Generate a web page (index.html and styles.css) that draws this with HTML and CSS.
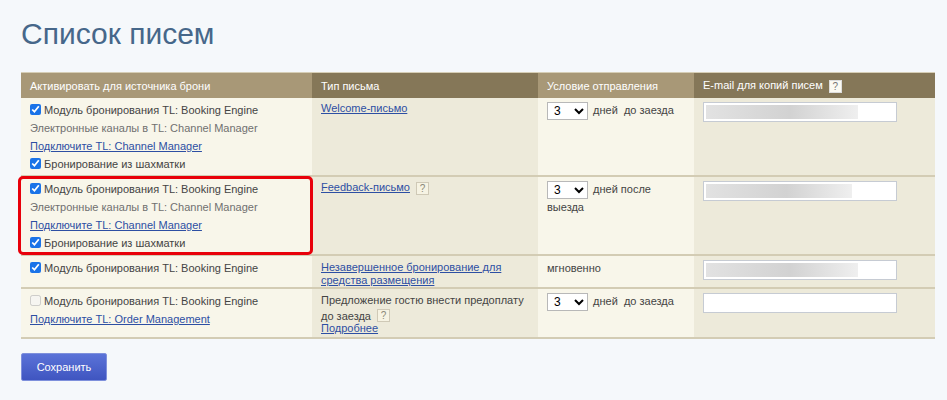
FILE: index.html
```html
<!DOCTYPE html>
<html lang="ru">
<head>
<meta charset="UTF-8">
<title>Список писем</title>
<link rel="stylesheet" href="styles.css">
</head>
<body>
<h1 class="page-title">Список писем</h1>

<table class="letters">
  <thead>
    <tr>
      <th class="col-src">Активировать для источника брони</th>
      <th class="col-type">Тип письма</th>
      <th class="col-cond">Условие отправления</th>
      <th class="col-mail">E-mail для копий писем <span class="help help-head">?</span></th>
    </tr>
  </thead>
  <tbody>
    <tr>
      <td class="col-src">
        <div class="src-line"><input type="checkbox" checked> Модуль бронирования TL: Booking Engine</div>
        <div class="src-line muted">Электронные каналы в TL: Channel Manager</div>
        <div class="src-line"><a href="#">Подключите TL: Channel Manager</a></div>
        <div class="src-line"><input type="checkbox" checked> Бронирование из шахматки</div>
      </td>
      <td class="col-type"><a href="#">Welcome-письмо</a></td>
      <td class="col-cond">
        <select><option>3</option></select> дней&nbsp; до заезда
      </td>
      <td class="col-mail"><input type="text" class="mail blurred"></td>
    </tr>
    <tr class="marked">
      <td class="col-src">
        <div class="highlight"></div>
        <div class="src-line"><input type="checkbox" checked> Модуль бронирования TL: Booking Engine</div>
        <div class="src-line muted">Электронные каналы в TL: Channel Manager</div>
        <div class="src-line"><a href="#">Подключите TL: Channel Manager</a></div>
        <div class="src-line"><input type="checkbox" checked> Бронирование из шахматки</div>
      </td>
      <td class="col-type"><a href="#">Feedback-письмо</a> <span class="help">?</span></td>
      <td class="col-cond">
        <select><option>3</option></select> дней после<br>выезда
      </td>
      <td class="col-mail"><input type="text" class="mail blurred short"></td>
    </tr>
    <tr>
      <td class="col-src">
        <div class="src-line"><input type="checkbox" checked> Модуль бронирования TL: Booking Engine</div>
      </td>
      <td class="col-type tight"><a href="#">Незавершенное бронирование для средства размещения</a></td>
      <td class="col-cond plain">мгновенно</td>
      <td class="col-mail"><input type="text" class="mail blurred"></td>
    </tr>
    <tr>
      <td class="col-src">
        <div class="src-line"><input type="checkbox" disabled> Модуль бронирования TL: Booking Engine</div>
        <div class="src-line"><a href="#">Подключите TL: Order Management</a></div>
      </td>
      <td class="col-type">
        <div class="offer">Предложение гостю внести предоплату до заезда <span class="help help-up">?</span></div>
        <a href="#" class="more">Подробнее</a>
      </td>
      <td class="col-cond">
        <select><option>3</option></select> дней&nbsp; до заезда
      </td>
      <td class="col-mail"><input type="text" class="mail"></td>
    </tr>
  </tbody>
</table>

<button class="save-button">Сохранить</button>
</body>
</html>
```

FILE: styles.css
```css
/* общий фон и шрифт */
html, body {
    margin: 0;
    padding: 0;
}

body {
    background-color: #f5f8fb;
    font-family: "Liberation Sans", Arial, sans-serif;
    font-size: 11px;
    color: #444;
    padding: 14px 12px 0 21px;
}

a {
    color: #2d4fa3;
}

/* заголовок */
.page-title {
    margin: 0 0 18px 0;
    font-size: 30px;
    font-weight: normal;
    color: #46678a;
    line-height: 40px;
}

/* таблица писем */
.letters {
    width: 914px;
    border-collapse: collapse;
}

.letters th {
    height: 25px;
    padding: 0 9px;
    text-align: left;
    font-weight: normal;
    font-size: 11px;
    color: #fff;
    border-top: 1px solid #d6ceb6;
}

.letters th.col-src,
.letters th.col-cond {
    background-color: #a89877;
}

.letters th.col-type,
.letters th.col-mail {
    background-color: #857758;
}

.letters td {
    vertical-align: top;
    padding: 3px 9px 2px 9px;
    border-bottom: 2px solid #d3ccb4;
    line-height: 16px;
}

.letters td.col-src,
.letters td.col-cond {
    background-color: #f8f6ea;
}

.letters td.col-type,
.letters td.col-mail {
    background-color: #edeada;
}

.col-src { width: 273px; }
.col-type { width: 208px; }
.col-cond { width: 138px; }

/* колонка источников */
.src-line {
    line-height: 18px;
    white-space: nowrap;
}

.src-line input {
    margin: 0;
    width: 11px;
    height: 11px;
    vertical-align: -1px;
    accent-color: #1a73e8;
}

.muted {
    color: #707070;
}

.marked .col-src {
    position: relative;
}

/* красная рамка поверх строки */
.highlight {
    position: absolute;
    left: -3px;
    top: -1px;
    right: -1px;
    bottom: -1px;
    border: 3px solid #e8000a;
    border-radius: 5px;
    pointer-events: none;
}

.letters td.col-type {
    padding-top: 2px;
}

.letters td.tight {
    line-height: 13px;
    padding-top: 5px;
    padding-bottom: 0;
}

.offer {
    line-height: 16px;
    padding-top: 1px;
}

.more {
    display: block;
    line-height: 13px;
    margin-top: -2px;
}

/* иконка подсказки */
.help {
    display: inline-block;
    width: 11px;
    height: 11px;
    line-height: 11px;
    font-size: 10px;
    text-align: center;
    color: #8a8a7a;
    background-color: #f6f3e3;
    border: 1px solid #cfc9b6;
    margin-left: 3px;
    vertical-align: -1px;
}

.help-up {
    vertical-align: 1px;
}

.help-head {
    background-color: #fbfaf3;
    color: #777;
    border-color: #ddd;
    margin-left: 3px;
}

/* условие отправления */
.letters td.col-cond {
    padding-top: 4px;
}

.letters td.plain {
    padding-top: 4px;
}

.col-cond select {
    width: 41px;
    height: 18px;
    font-family: "Liberation Sans", Arial, sans-serif;
    font-size: 12px;
    padding: 0 0 0 2px;
    margin: 0 2px 0 0;
    border: 1px solid #b8b8b8;
    background-color: #fff;
    vertical-align: top;
}

/* поле e-mail */
.mail {
    width: 194px;
    height: 20px;
    box-sizing: border-box;
    border: 1px solid #c6cbd3;
    background-color: #fff;
    margin-top: 1px;
    padding: 0;
    vertical-align: top;
}

.blurred {
    background-image: linear-gradient(to right, #e2e2e2, #d2d2d2 55%, #efefef);
    background-size: 152px 14px;
    background-position: 2px 2px;
    background-repeat: no-repeat;
}

.blurred.short {
    background-size: 146px 14px;
}

/* кнопка сохранения */
.save-button {
    margin-top: 14px;
    width: 86px;
    height: 28px;
    font-family: "Liberation Sans", Arial, sans-serif;
    font-size: 11px;
    color: #fff;
    background: linear-gradient(#5b73d8, #3f55c0);
    border: 1px solid #7e90dc;
    border-radius: 2px;
    cursor: pointer;
}
```
